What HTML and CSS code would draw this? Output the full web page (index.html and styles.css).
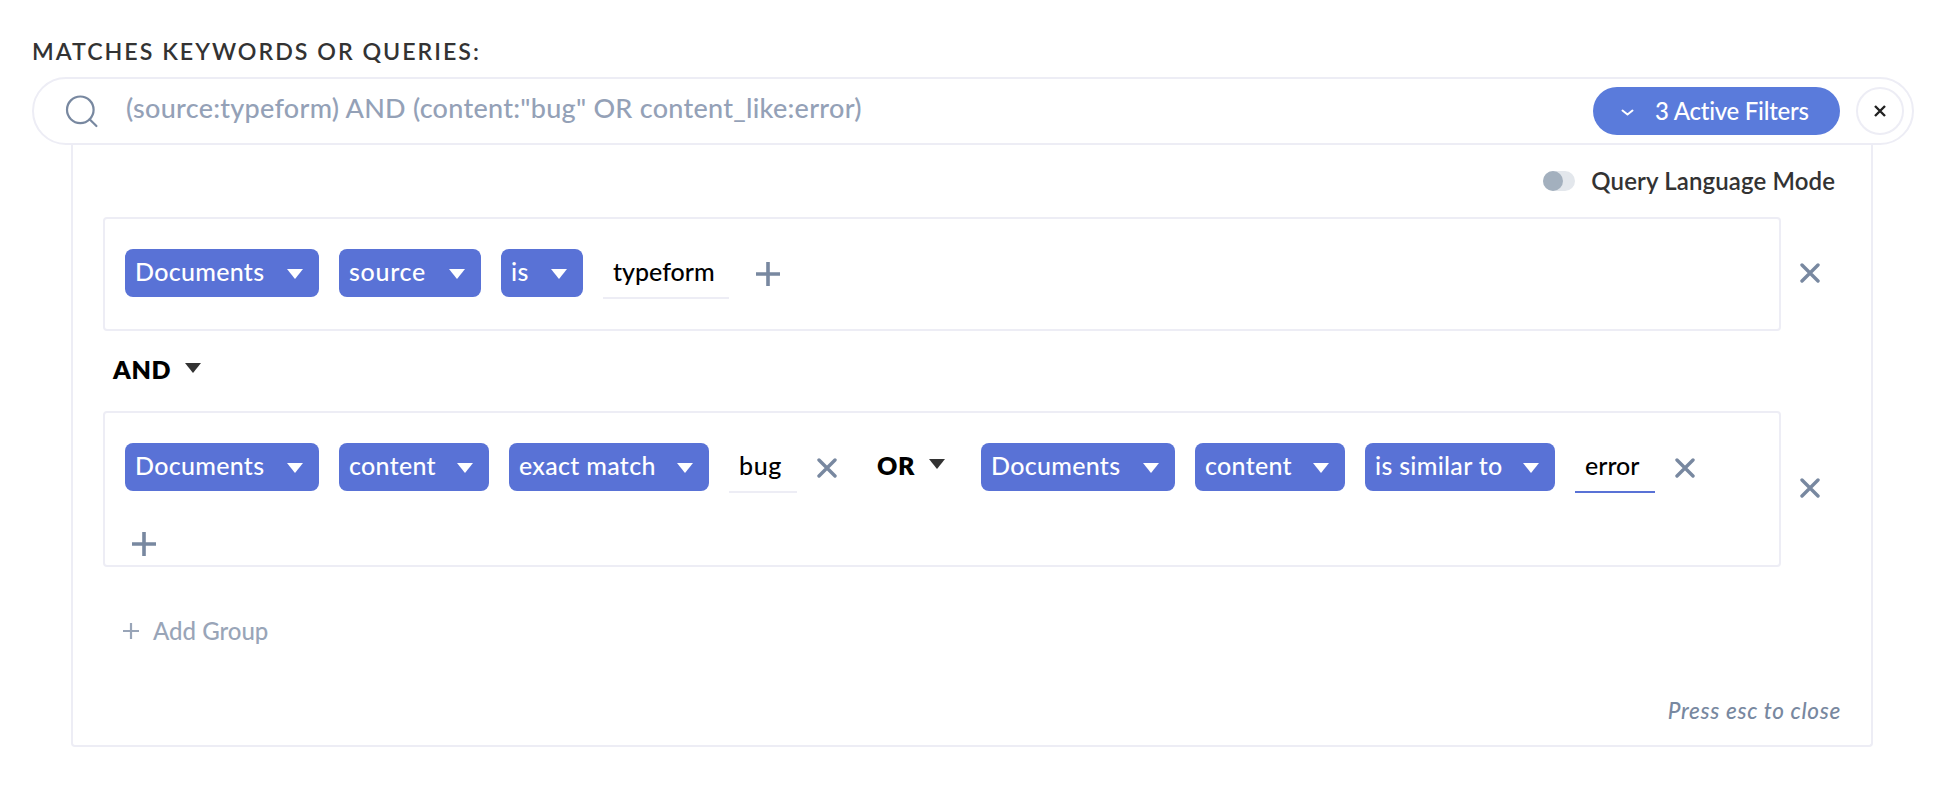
FILE: index.html
```html
<!DOCTYPE html>
<html lang="en">
<head>
  <meta charset="UTF-8">
  <meta name="viewport" content="width=device-width, initial-scale=1.0">
  <title>Query Builder</title>
  <link rel="stylesheet" href="styles.css">
</head>
<body>
  <svg class="icon-defs">
    <symbol id="caret" viewBox="0 0 16 10"><path d="M0 0h16L8 10z" fill="currentColor"/></symbol>
    <symbol id="cross" viewBox="0 0 20 20"><path d="M2 2l16 16M18 2L2 18" stroke="currentColor" stroke-width="3.4" stroke-linecap="round"/></symbol>
    <symbol id="plus" viewBox="0 0 24 24"><path d="M12 0v24M0 12h24" stroke="currentColor" stroke-width="3.6"/></symbol>
  </svg>
  <div class="query-builder">
    <h1 class="title">Matches keywords or queries:</h1>
    <div class="search-bar">
      <svg class="search-icon" viewBox="0 0 34 34" fill="none" stroke="currentColor" stroke-width="2.2" stroke-linecap="round">
        <circle cx="15.3" cy="15.8" r="13.3"/>
        <path d="M24.6 25.2L31.4 32"/>
      </svg>
      <div class="search-text">(source:typeform) AND (content:"bug" OR content_like:error)</div>
      <button type="button" class="filters-button">
        <svg class="chevron" viewBox="0 0 14 8" fill="none" stroke="currentColor" stroke-width="2" stroke-linecap="round" stroke-linejoin="round"><path d="M1.5 1.5l5 4 5-4"/></svg>
        <span>3 Active Filters</span>
      </button>
      <button type="button" class="clear-button">
        <svg viewBox="0 0 12 12"><path d="M1 1l10 10M11 1L1 11" stroke="currentColor" stroke-width="2.4"/></svg>
      </button>
    </div>

    <div class="panel">
      <div class="mode-row">
        <span class="toggle"><span class="toggle-knob"></span></span>
        <span class="mode-label">Query Language Mode</span>
      </div>

      <div class="group-row">
        <div class="group">
          <div class="pill documents"><span>Documents</span><svg class="caret"><use href="#caret"/></svg></div>
          <div class="pill source"><span>source</span><svg class="caret"><use href="#caret"/></svg></div>
          <div class="pill is"><span>is</span><svg class="caret"><use href="#caret"/></svg></div>
          <div class="value typeform"><span>typeform</span></div>
          <svg class="plus"><use href="#plus"/></svg>
        </div>
        <svg class="cross remove-group"><use href="#cross"/></svg>
      </div>

      <div class="operator and"><span>AND</span><svg class="caret"><use href="#caret"/></svg></div>

      <div class="group-row">
        <div class="group wrapped">
          <div class="pill documents"><span>Documents</span><svg class="caret"><use href="#caret"/></svg></div>
          <div class="pill content"><span>content</span><svg class="caret"><use href="#caret"/></svg></div>
          <div class="pill exact"><span>exact match</span><svg class="caret"><use href="#caret"/></svg></div>
          <div class="value bug"><span>bug</span></div>
          <svg class="cross"><use href="#cross"/></svg>
          <div class="operator or"><span>OR</span><svg class="caret"><use href="#caret"/></svg></div>
          <div class="pill documents"><span>Documents</span><svg class="caret"><use href="#caret"/></svg></div>
          <div class="pill content"><span>content</span><svg class="caret"><use href="#caret"/></svg></div>
          <div class="pill similar"><span>is similar to</span><svg class="caret"><use href="#caret"/></svg></div>
          <div class="value error focused"><span>error</span></div>
          <svg class="cross"><use href="#cross"/></svg>
          <div class="break"></div>
          <svg class="plus next-line"><use href="#plus"/></svg>
        </div>
        <svg class="cross remove-group"><use href="#cross"/></svg>
      </div>

      <div class="add-group">
        <svg viewBox="0 0 16 16"><path d="M8 0v16M0 8h16" stroke="currentColor" stroke-width="2.2"/></svg>
        <span>Add Group</span>
      </div>
      <div class="hint">Press esc to close</div>
    </div>
  </div>
</body>
</html>
```
FILE: styles.css
```css
* {
  box-sizing: border-box;
}
body {
  margin: 0;
  background: #fff;
  color: #333;
  font-family: Lato, "Liberation Sans", sans-serif;
  font-weight: 500;
  font-variant-ligatures: none;
}
button {
  font: inherit;
  padding: 0;
  border: none;
}
span {
  white-space: nowrap;
}
svg {
  display: block;
  flex-shrink: 0;
}
.icon-defs {
  display: none;
}
.query-builder {
  width: 1882px;
  margin-left: 32px;
  padding-top: 37px;
}
.title {
  margin: 0;
  height: 40px;
  font-size: 23.2px;
  line-height: 29px;
  font-weight: 600;
  letter-spacing: 2px;
  text-transform: uppercase;
}
.search-bar {
  display: flex;
  align-items: center;
  height: 68px;
  padding: 0 8px 0 31px;
  border: 2px solid #ededf5;
  border-radius: 34px;
  background: #fff;
}
.search-icon {
  width: 34px;
  height: 34px;
  color: #7888a0;
}
.search-text {
  flex: 1;
  padding: 0 0 6px 27px;
  font-size: 27px;
  line-height: 34px;
  letter-spacing: 0.27px;
  color: #94a1b7;
}
.filters-button {
  display: flex;
  align-items: center;
  width: 247px;
  height: 48px;
  padding-left: 28px;
  border-radius: 24px;
  background: #5a7bdb;
  color: #fff;
  font-size: 24px;
  letter-spacing: -0.25px;
}
.filters-button span {
  padding-bottom: 2px;
}
.chevron {
  width: 14px;
  height: 8px;
  margin: 4px 20px 0 0;
}
.clear-button {
  display: flex;
  align-items: center;
  justify-content: center;
  width: 48px;
  height: 48px;
  margin-left: 16px;
  border: 2px solid #ededf5;
  border-radius: 50%;
  background: #fff;
  color: #222;
}
.clear-button svg {
  width: 12px;
  height: 12px;
}
.panel {
  width: 1802px;
  height: 602px;
  margin-left: 39px;
  padding: 0 30px;
  border: 2px solid #ededf5;
  border-top: none;
  border-radius: 0 0 4px 4px;
}
.mode-row {
  display: flex;
  align-items: center;
  justify-content: flex-end;
  height: 72px;
  padding: 0 6px 0 0;
}
.toggle {
  width: 32px;
  height: 20px;
  margin-right: 16px;
  border-radius: 10px;
  background: #e3e7ec;
}
.toggle-knob {
  display: block;
  width: 20px;
  height: 20px;
  border-radius: 50%;
  background: #a3b0be;
}
.mode-label {
  padding-bottom: 2px;
  font-size: 24px;
  font-weight: 600;
  letter-spacing: 0.12px;
}
.group-row {
  display: flex;
  align-items: center;
}
.group {
  display: flex;
  flex-wrap: wrap;
  align-items: flex-start;
  width: 1678px;
  height: 114px;
  padding: 30px 20px 0;
  border: 2px solid #ededf5;
  border-radius: 4px;
}
.group.wrapped {
  height: 156px;
  align-content: flex-start;
}
.pill {
  display: flex;
  align-items: center;
  justify-content: space-between;
  height: 48px;
  margin-right: 20px;
  padding: 0 16px 0 10px;
  border-radius: 8px;
  background: #5972d6;
  color: #fff;
  font-size: 25px;
  letter-spacing: 0.3px;
}
.pill span {
  padding-bottom: 4px;
}
.pill .caret {
  margin-top: 2px;
}
.documents {
  width: 194px;
}
.source {
  width: 142px;
}
.source span {
  letter-spacing: 0.7px;
}
.is {
  width: 82px;
}
.content {
  width: 150px;
}
.exact {
  width: 200px;
}
.similar {
  width: 190px;
}
.caret {
  width: 16px;
  height: 10px;
}
.value {
  height: 50px;
  padding-left: 10px;
  border-bottom: 2px solid #ededf5;
  color: #000;
  font-size: 25px;
  line-height: 45px;
}
.typeform {
  width: 126px;
}
.bug {
  width: 68px;
  letter-spacing: 0.6px;
}
.error {
  width: 80px;
}
.focused {
  border-color: #5972d6;
}
.plus {
  width: 24px;
  height: 24px;
  margin: 13px 0 0 27px;
  color: #7888a0;
}
.plus.next-line {
  margin: 39px 0 0 7px;
}
.cross {
  width: 20px;
  height: 20px;
  margin: 15px 0 0 20px;
  color: #7888a0;
}
.cross.remove-group {
  margin: -3px 0 0 19px;
}
.break {
  width: 100%;
}
.operator {
  display: flex;
  align-items: center;
  color: #000;
  font-size: 25px;
  font-weight: 800;
  letter-spacing: 0.6px;
}
.operator .caret {
  color: #333;
}
.and {
  height: 80px;
  padding: 0 0 4px 10px;
}
.and .caret {
  margin: -2px 0 0 14px;
}
.or {
  width: 104px;
  height: 48px;
  margin-left: 40px;
  padding-bottom: 4px;
}
.or .caret {
  margin: -2px 0 0 14px;
}
.add-group {
  display: flex;
  align-items: center;
  height: 30px;
  margin-top: 49px;
  padding-left: 20px;
  color: #99a5b8;
  font-size: 24px;
}
.add-group svg {
  width: 16px;
  height: 16px;
  margin-right: 14px;
}
.add-group span {
  padding-bottom: 2px;
}
.hint {
  margin-top: 50px;
  font-size: 22.5px;
  line-height: 30px;
  font-style: italic;
  letter-spacing: 0.7px;
  text-align: right;
  color: #7888a0;
}
```
